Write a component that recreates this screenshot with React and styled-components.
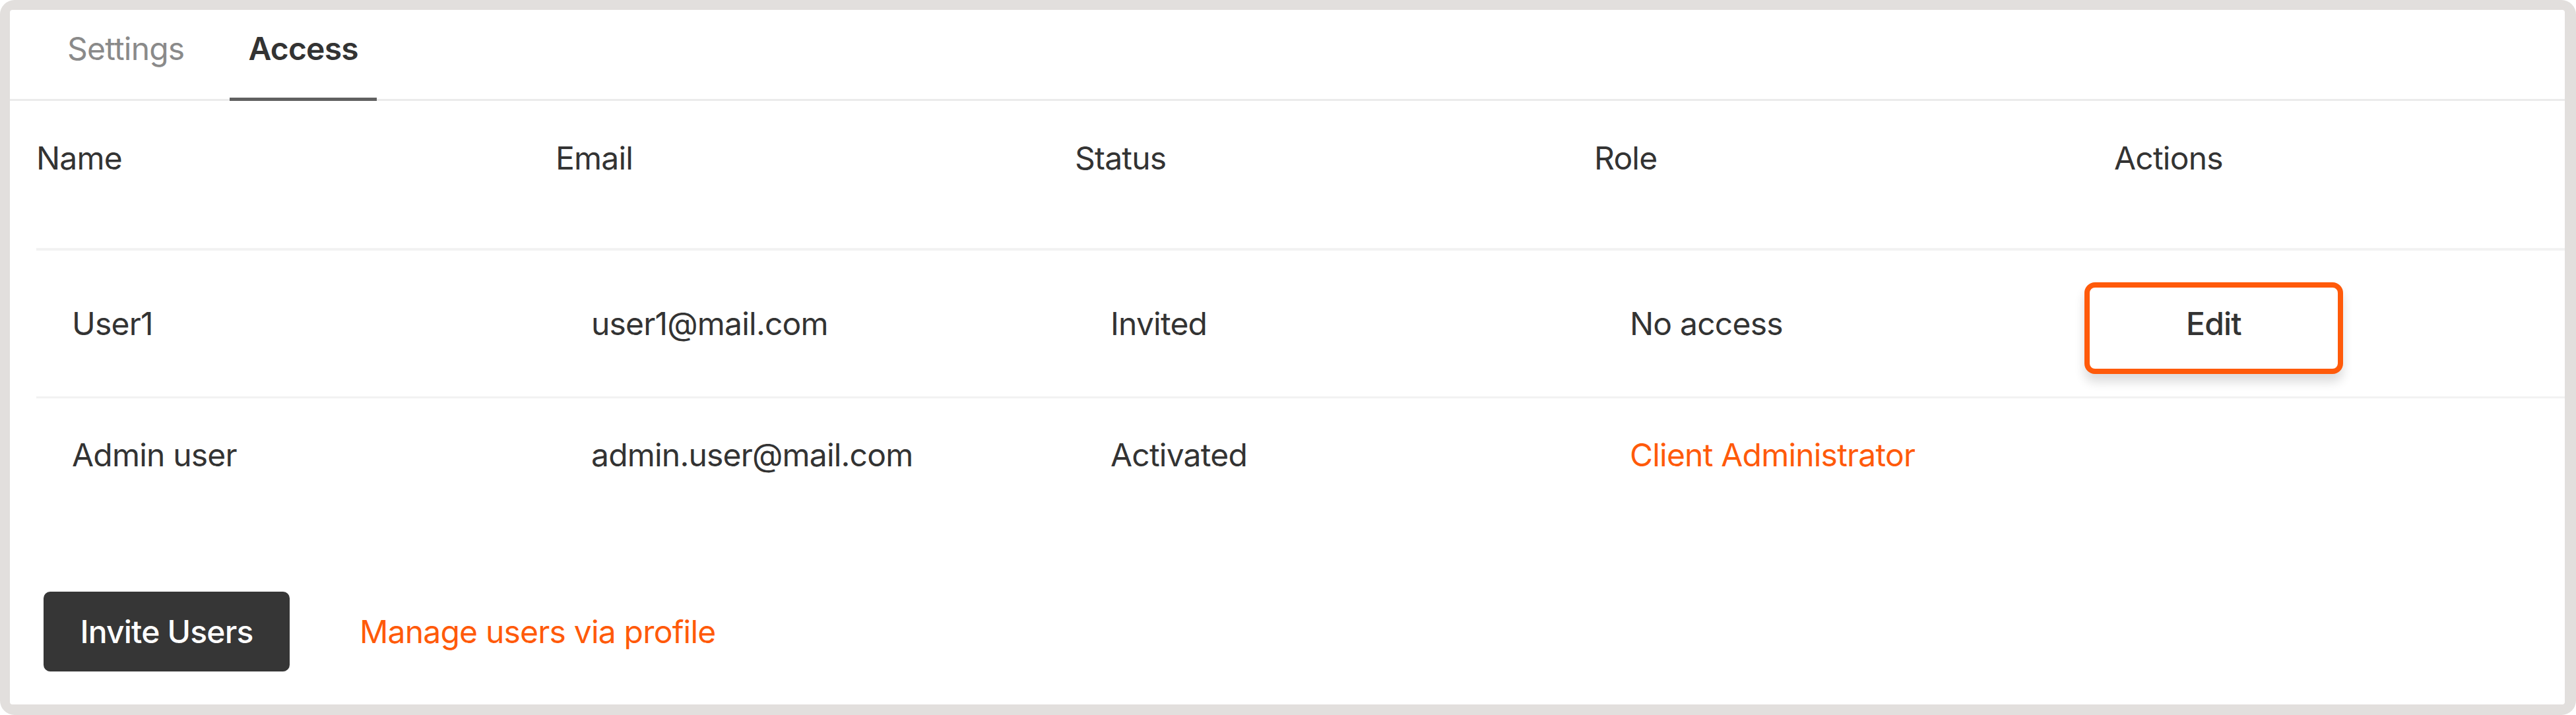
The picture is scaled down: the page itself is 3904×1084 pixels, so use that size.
import React from 'react';
import styled, { createGlobalStyle } from 'styled-components';

const COLORS = {
  text: '#333333',
  muted: '#8a8a8a',
  accent: '#ff5a0a',
  frame: '#e2dfdd',
  divider: '#ebebeb',
  rowLine: '#f2f2f2',
  dark: '#363636',
};

const GlobalStyle = createGlobalStyle`
  html, body {
    margin: 0;
    padding: 0;
    background: #ffffff;
  }
  body {
    font-family: Inter, "Noto Sans", "Liberation Sans", sans-serif;
    color: ${COLORS.text};
    letter-spacing: -0.8px;
  }
  * {
    box-sizing: border-box;
  }
`;

const users = [
  { name: 'User1', email: 'user1@mail.com', status: 'Invited', role: 'No access', editable: true },
  { name: 'Admin user', email: 'admin.user@mail.com', status: 'Activated', role: 'Client Administrator', admin: true },
];

const App = () => {
  return (
    <>
      <GlobalStyle />
      <Frame>
        <Panel>
          <TabList>
            <Tab>Settings</Tab>
            <Tab $active>Access</Tab>
          </TabList>

          <Table>
            <HeaderRow>
              <HeaderCell>Name</HeaderCell>
              <HeaderCell>Email</HeaderCell>
              <HeaderCell>Status</HeaderCell>
              <HeaderCell>Role</HeaderCell>
              <HeaderCell>Actions</HeaderCell>
            </HeaderRow>
            {users.map((user, i) => (
              <Row key={user.email} $last={i === users.length - 1}>
                <Cell>{user.name}</Cell>
                <Cell>{user.email}</Cell>
                <Cell>{user.status}</Cell>
                <Cell $accent={user.admin}>{user.role}</Cell>
                <ActionCell>
                  {user.editable && <EditButton>Edit</EditButton>}
                </ActionCell>
              </Row>
            ))}
          </Table>

          <Footer>
            <InviteButton>Invite Users</InviteButton>
            <ManageLink>Manage users via profile</ManageLink>
          </Footer>
        </Panel>
      </Frame>
    </>
  );
};

const Frame = styled.div`
  width: 3904px;
  height: 1084px;
  border-style: solid;
  border-color: ${COLORS.frame};
  border-width: 15px 17px 16px 15px;
  border-radius: 22px;
  display: flex;
`;

const Panel = styled.div`
  flex: 1;
  background: #ffffff;
  border-radius: 4px;
  display: flex;
  flex-direction: column;
`;

const TabList = styled.div`
  display: flex;
  gap: 41px;
  padding-left: 59px;
  border-bottom: 3px solid ${COLORS.divider};
`;

const Tab = styled.div`
  font-size: 48px;
  line-height: 58px;
  padding: 30px 28px 45px;
  margin-bottom: -3px;
  font-weight: ${p => (p.$active ? 600 : 400)};
  color: ${p => (p.$active ? COLORS.text : COLORS.muted)};
  border-bottom: 5px solid ${p => (p.$active ? '#616161' : 'transparent')};
`;

const Table = styled.div`
  margin-left: 40px;
  display: flex;
  flex-direction: column;
`;

const columns = '787px 787px 787px 788px 1fr';

const HeaderRow = styled.div`
  display: grid;
  grid-template-columns: ${columns};
  padding: 58px 0 107px;
  border-bottom: 4px solid ${COLORS.rowLine};
`;

const HeaderCell = styled.div`
  font-size: 48px;
  line-height: 58px;
  color: ${COLORS.text};
`;

const Row = styled.div`
  display: grid;
  grid-template-columns: ${columns};
  align-items: center;
  border-bottom: ${p => (p.$last ? 'none' : `3px solid ${COLORS.rowLine}`)};
`;

const Cell = styled.div`
  font-size: 48px;
  line-height: 58px;
  padding: 57px 0 57px 54px;
  color: ${p => (p.$accent ? COLORS.accent : COLORS.text)};
`;

const ActionCell = styled.div`
  padding: 48px 0 34px;
  display: flex;
`;

const EditButton = styled.button`
  margin-left: -45px;
  width: 392px;
  height: 139px;
  border: 8px solid ${COLORS.accent};
  border-radius: 16px;
  background: #ffffff;
  box-shadow: 0 12px 16px rgba(0, 0, 0, 0.14);
  font-family: inherit;
  letter-spacing: inherit;
  font-size: 48px;
  line-height: 58px;
  font-weight: 500;
  color: ${COLORS.text};
  padding: 0 0 14px;
  display: flex;
  align-items: center;
  justify-content: center;
`;

const Footer = styled.div`
  display: flex;
  align-items: center;
  gap: 106px;
  margin-top: 121px;
  padding-left: 51px;
`;

const InviteButton = styled.button`
  width: 373px;
  height: 121px;
  border: none;
  border-radius: 10px;
  background: ${COLORS.dark};
  color: #ffffff;
  font-family: inherit;
  letter-spacing: inherit;
  font-size: 48px;
  line-height: 58px;
  font-weight: 500;
  padding: 0;
`;

const ManageLink = styled.a`
  font-size: 48px;
  line-height: 58px;
  color: ${COLORS.accent};
  text-decoration: none;
  cursor: pointer;
`;

export default App;
